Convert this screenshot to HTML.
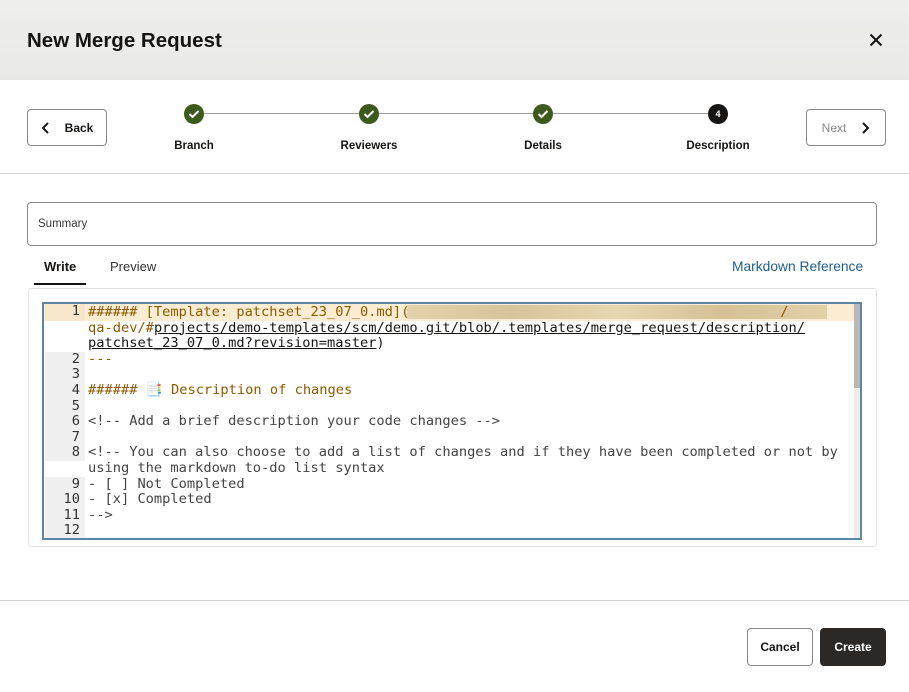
<!DOCTYPE html>
<html><head><style>
*{box-sizing:border-box;margin:0;padding:0}
body{width:909px;height:692px;background:#fff;font-family:"Liberation Sans",sans-serif;position:relative;overflow:hidden;color:#161513}
.a{position:absolute}
.hdr{left:0;top:0;width:909px;height:80px;background:linear-gradient(#eeeeed,#e9e9e8)}
.btn{position:absolute;border:1px solid #8a8886;border-radius:4px;background:#fff;font-weight:bold;font-size:12px;display:flex;align-items:center;justify-content:center}
.dot{position:absolute;width:20px;height:20px;border-radius:50%;background:#3d5a1e;top:104px}
.dot svg{position:absolute;left:4px;top:5px}
.lbl{position:absolute;top:140px;font-size:11.5px;font-weight:bold;transform:translateX(-50%)}
.code{font-family:"DejaVu Sans Mono","Liberation Mono",monospace;font-size:13.7px;line-height:15.6px;white-space:pre}
.ln{position:absolute;left:1px;width:40px;text-align:right;padding-right:5px;color:#333;background:#f0f0f0}
.tx{position:absolute;left:44px}
.h{color:#8a5a00}
.u{text-decoration:underline}
.c{color:#444}
</style></head><body>
<div class="a hdr"></div>
<div class="a" style="left:27px;top:29px;font-size:20.5px;font-weight:bold">New Merge Request</div>
<svg class="a" style="left:869px;top:33px" width="14" height="14" viewBox="0 0 14 14"><path d="M1.5 1.5L12.5 12.5M12.5 1.5L1.5 12.5" stroke="#161513" stroke-width="2"/></svg>

<div class="btn" style="left:27px;top:109px;width:80px;height:37px"><svg width="10" height="12" style="margin-right:14px" viewBox="0 0 10 12"><path d="M7 1L2 6L7 11" stroke="#161513" stroke-width="2" fill="none"/></svg>Back</div>
<div class="btn" style="left:806px;top:109px;width:80px;height:37px;color:#8a8886;font-weight:normal">Next<svg width="10" height="12" style="margin-left:14px" viewBox="0 0 10 12"><path d="M3 1L8 6L3 11" stroke="#161513" stroke-width="2" fill="none"/></svg></div>

<div class="a" style="left:194px;top:113px;width:524px;height:1px;background:#9a9a9a"></div>
<div class="dot" style="left:184px"><svg width="12" height="10" viewBox="0 0 12 10"><path d="M1.5 5L4.5 8L10.5 2" stroke="#fff" stroke-width="2" fill="none"/></svg></div>
<div class="dot" style="left:359px"><svg width="12" height="10" viewBox="0 0 12 10"><path d="M1.5 5L4.5 8L10.5 2" stroke="#fff" stroke-width="2" fill="none"/></svg></div>
<div class="dot" style="left:533px"><svg width="12" height="10" viewBox="0 0 12 10"><path d="M1.5 5L4.5 8L10.5 2" stroke="#fff" stroke-width="2" fill="none"/></svg></div>
<div class="dot" style="left:708px;background:#161513;color:#fff;font-size:9px;font-weight:bold;text-align:center;line-height:20px">4</div>
<div class="lbl" style="left:194px">Branch</div>
<div class="lbl" style="left:369px">Reviewers</div>
<div class="lbl" style="left:543px">Details</div>
<div class="lbl" style="left:718px">Description</div>
<div class="a" style="left:0;top:173px;width:909px;height:1px;background:#d8d8d8"></div>

<div class="a" style="left:27px;top:202px;width:850px;height:44px;border:1px solid #8a8886;border-radius:4px"></div>
<div class="a" style="left:38px;top:218px;font-size:11.5px;color:#3a3a3a">Summary</div>

<div class="a" style="left:44px;top:259px;font-size:13px;font-weight:bold">Write</div>
<div class="a" style="left:34px;top:283px;width:52px;height:2px;background:#161513"></div>
<div class="a" style="left:110px;top:259px;font-size:13px;color:#333">Preview</div>
<div class="a" style="left:732px;top:259px;font-size:13.8px;color:#1f5d8c">Markdown Reference</div>

<div class="a" style="left:28px;top:288px;width:849px;height:259px;border:1px solid #e2e2e2;border-radius:3px"></div>
<div class="a code" style="left:42px;top:302px;width:820px;height:238px;border:2px solid #5b86a6;overflow:hidden;background:#fff">
<div class="a" style="left:0;top:0;width:816px;height:17px;background:#fbecd2"></div>
<div class="a" style="left:363px;top:1px;width:420px;height:14px;background:linear-gradient(90deg,#e4d2ac,#d8c49b,#e6d6b2,#d6c197,#e2d0a8)"></div>
<div class="a" style="left:810px;top:0;width:6px;height:234px;background:#ececec"></div>
<div class="a" style="left:810px;top:0;width:6px;height:84px;background:#b8b8b8"></div>
<div style="position:absolute;left:0;top:1px;width:816px;height:240px">
<div class="ln" style="top:-1px;height:17px;background:#f5e6cc">1</div>
<div class="tx h" style="top:0">###### [Template: patchset_23_07_0.md](                                             /</div>
<div class="tx" style="top:15.6px"><span class="h">qa-dev/#</span><span class="u">projects/demo-templates/scm/demo.git/blob/.templates/merge_request/description/</span></div>
<div class="tx" style="top:31.2px"><span class="u">patchset_23_07_0.md?revision=master</span>)</div>
<div class="ln" style="top:46.8px;height:78px">2
3
4
5
6</div>
<div class="tx" style="top:46.8px"><span class="h">---</span>

<span class="h">###### 📑 Description of changes</span>

<span class="c">&lt;!-- Add a brief description your code changes --&gt;</span></div>
<div class="ln" style="top:124.8px;height:31.2px">7
8</div>
<div class="tx c" style="top:140.4px">&lt;!-- You can also choose to add a list of changes and if they have been completed or not by
using the markdown to-do list syntax
- [ ] Not Completed
- [x] Completed
--&gt;</div>
<div class="ln" style="top:171.6px;height:70px">9
10
11
12</div>
</div>
</div>

<div class="a" style="left:0;top:600px;width:909px;height:1px;background:#d0d0d0"></div>
<div class="btn" style="left:747px;top:628px;width:66px;height:38px">Cancel</div>
<div class="btn" style="left:820px;top:628px;width:66px;height:38px;background:#2b2826;border-color:#2b2826;color:#fff">Create</div>
</body></html>
